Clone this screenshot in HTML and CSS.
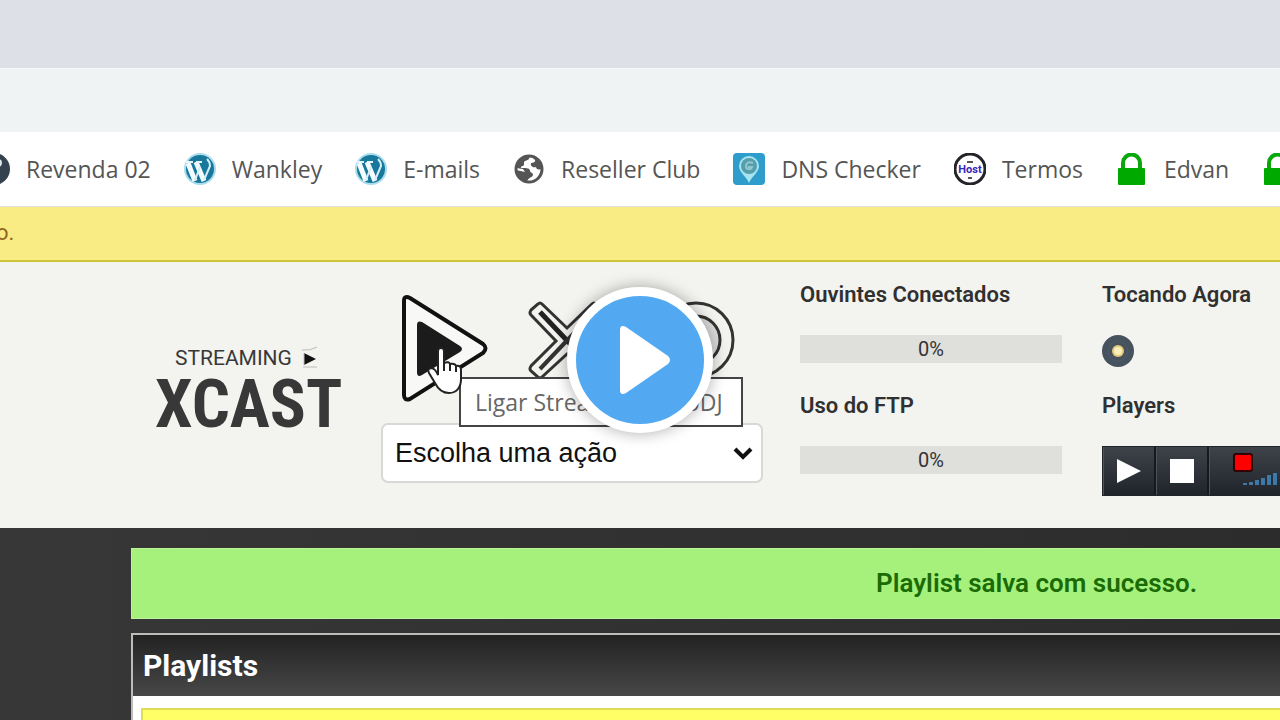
FILE: index.html
```html
<!DOCTYPE html>
<html lang="pt-BR">
<head>
<meta charset="utf-8">
<title>Streaming XCAST</title>
<link rel="stylesheet" href="styles.css">
</head>
<body>
<svg class="defs" aria-hidden="true">
  <symbol id="wordpress" viewBox="0 0 32 32">
    <circle cx="16" cy="16" r="16" fill="#a9dcec"/>
    <circle cx="16" cy="16" r="14" fill="#17789c"/>
    <path d="M4 10l7 18M12 9l8 19" stroke="#f4fcff" stroke-width="5" fill="none"/>
    <path d="M11 27l5-13M20 27l6-14q0-4-3-7" stroke="#d3eef6" stroke-width="2" fill="none"/>
    <path d="M2 9h7M12 9h6" stroke="#e4f6fb" stroke-width="2"/>
  </symbol>
  <symbol id="lock" viewBox="0 0 32 32">
    <path d="M7 16V10a8 8 0 0 1 17 0v6" fill="none" stroke="#0aa80a" stroke-width="4"/>
    <rect x="2" y="15" width="27" height="17" rx="1" fill="#00a900"/>
  </symbol>
</svg>

<div class="tabstrip"></div>
<div class="toolbar"></div>

<nav class="bookmarks">
  <a class="bookmark" href="#"><svg class="favicon" viewBox="0 0 32 32"><circle cx="16" cy="16" r="16" fill="#34414f"/><circle cx="20" cy="10" r="4" fill="#dfe8ee"/></svg>Revenda 02</a>
  <a class="bookmark" href="#"><svg class="favicon"><use href="#wordpress"/></svg>Wankley</a>
  <a class="bookmark" href="#"><svg class="favicon"><use href="#wordpress"/></svg>E-mails</a>
  <a class="bookmark" href="#"><svg class="favicon" viewBox="0 0 32 32"><circle cx="16" cy="16" r="13" fill="#fff" stroke="#555" stroke-width="3"/><path d="M3 15C4 7 10 3 17 3c-1 4-2 4-5 5-2 1 0 4-2 5-2 0-3 2-1 2 5 0 8 0 8 3 0 2 3 1 3 4-1 3-5 2-6 7C8 28 3 23 3 17l9 2-2-3zM20 3c5 1 9 6 9 12-3 3-6 1-6-1-3 1-6-1-5-4 2 0 5-1 4-3s-3-1-2-4z" fill="#555"/></svg>Reseller Club</a>
  <a class="bookmark" href="#"><svg class="favicon" viewBox="0 0 32 32"><rect width="32" height="32" rx="4" fill="#2e9dcc"/><path d="M16 30C13 23 6 19 6 13a10 10 0 0 1 20 0c0 6-7 10-10 17z" fill="#a5e4f0"/><circle cx="16" cy="13" r="8" fill="#559fac"/><path d="M20 10c-4-2-7 0-7 3 0 4 5 4 6 1h-4" fill="none" stroke="#94c6cd" stroke-width="2"/></svg>DNS Checker</a>
  <a class="bookmark" href="#"><svg class="favicon" viewBox="0 0 32 32"><circle cx="16" cy="16" r="15" fill="#fff" stroke="#23232a" stroke-width="3"/><text x="16" y="20" class="host">Host</text><path d="M13 9h6M14 25h4" stroke="#555" stroke-width="2"/></svg>Termos</a>
  <a class="bookmark" href="#"><svg class="favicon"><use href="#lock"/></svg>Edvan</a>
  <a class="bookmark" href="#" aria-label="Site seguro"><svg class="favicon"><use href="#lock"/></svg></a>
</nav>

<div class="notice">o.</div>

<header class="header">
  <div class="logo">
    <div class="logo-top">STREAMING
      <svg class="logo-mark" viewBox="0 0 20 24"><path d="M4 7l12 6-12 6z" fill="#111"/><path d="M2 4q8 1 15-3M3 21h14M4 7v12" fill="none" stroke="#bbb"/></svg>
    </div>
    <div class="logo-name">XCAST</div>
  </div>

  <div class="controls">
    <div class="actions">
      <button class="action" aria-label="Ligar Streaming AutoDJ">
        <svg width="86" height="108" viewBox="0 0 86 108"><path d="M2 6q0-6 6-3l73 46q5 4 0 9L8 104q-6 2-6-4z" fill="#f8f8f6" stroke="#111" stroke-width="4"/><path d="M15 30q0-5 5-3l38 24q4 3 0 6L20 80q-5 3-5-3z" fill="#1b1b1b"/></svg>
      </button>
      <button class="action" aria-label="Desligar">
        <svg width="90" height="80" viewBox="0 0 90 80"><path d="M10 3q2-2 4 0l25 24L64 3q2-2 4 0l7 6q2 3 0 5L49 40l26 26q2 2 0 4l-7 6q-2 2-4 0L39 53 14 76q-2 2-4 0l-7-6q-2-2 0-5l25-25L3 14q-2-2 0-5z" fill="#f3f3f0" stroke="#333" stroke-width="3"/><path d="M12 11l54 57" stroke="#222" stroke-width="5"/><path d="M66 11 12 68" stroke="#333" stroke-width="4"/></svg>
      </button>
      <button class="action" aria-label="Reiniciar">
        <svg width="78" height="80" viewBox="0 0 78 80"><circle cx="39" cy="39" r="37" fill="#f3f3f0" stroke="#333" stroke-width="3"/><circle cx="39" cy="39" r="24" fill="#ddd" stroke="#333" stroke-width="3"/></svg>
      </button>
    </div>
    <select class="select" aria-label="Ação"><option>Escolha uma ação</option></select>
    <div class="tooltip">Ligar Streaming AutoDJ</div>
    <svg class="cursor" viewBox="0 0 36 48"><path d="M11 24V4q0-3 3-3t3 3v12q5-2 6 1 5-1 6 2 5-1 5 4v9c0 8-4 14-12 14-7 0-11-4-14-10L2 26q-2-4 2-5 4 0 7 7z" fill="#fff" stroke="#222" stroke-width="2"/><path d="M17 15v9M23 17v7M29 19v6" stroke="#222" stroke-width="2"/></svg>
  </div>

  <div class="column meters">
    <h2 class="label">Ouvintes Conectados</h2>
    <div class="meter">0%</div>
    <h2 class="label second">Uso do FTP</h2>
    <div class="meter">0%</div>
  </div>

  <div class="column now">
    <h2 class="label">Tocando Agora</h2>
    <svg class="disc" viewBox="0 0 32 32"><circle cx="16" cy="16" r="16" fill="#46525e"/><circle cx="16" cy="16" r="10" fill="none" stroke="#4e5a66"/><circle cx="16" cy="16" r="6" fill="#e3cb7c"/><circle cx="16" cy="16" r="4" fill="#fbeebb"/></svg>
    <h2 class="label after-disc">Players</h2>
    <div class="player">
      <button class="player-button" aria-label="Tocar"><svg width="24" height="24" viewBox="0 0 24 24"><path d="M0 0l24 12L0 24z" fill="#fff"/></svg></button>
      <button class="player-button" aria-label="Parar"><svg width="24" height="24" viewBox="0 0 24 24"><path d="M0 0h24v24H0z" fill="#fff"/></svg></button>
      <div class="volume"><svg width="68" height="48" viewBox="0 0 68 48"><rect x="25" y="7" width="18" height="17" rx="2" fill="#f00" stroke="#300" stroke-width="2"/><path d="M36 38v-2M42 38v-3M48 38v-5M54 38v-7M60 38V28M66 38V26" stroke="#3c78a8" stroke-width="4"/></svg></div>
    </div>
  </div>
</header>

<main class="main">
  <div class="success">Playlist salva com sucesso.</div>
  <section class="panel">
    <h1 class="panel-title">Playlists</h1>
    <div class="panel-body"><div class="panel-note"></div></div>
  </section>
</main>

<button class="play-overlay" aria-label="Reproduzir vídeo">
  <svg width="52" height="70" viewBox="0 0 52 70"><path d="M1 5q0-6 6-3l42 29q4 4 0 8L7 68q-6 3-6-3z" fill="#fff"/></svg>
</button>
</body>
</html>
```
FILE: styles.css
```css
* { box-sizing: border-box; }
body {
  margin: 0;
  height: 100vh;
  overflow: hidden;
  display: flex;
  flex-direction: column;
  background: #363636;
  font-family: Roboto, sans-serif;
  color: #333;
}
button { padding: 0; border: 0; background: none; cursor: pointer; }
h1, h2 { margin: 0; }
svg { display: block; flex: none; }
.defs { position: absolute; width: 0; height: 0; }

.tabstrip { flex: none; height: 69px; background: #dde1e7; border-bottom: 1px solid #f7f8fa; }
.toolbar { flex: none; height: 63px; background: #eff3f4; }
.bookmarks {
  flex: none;
  display: flex;
  align-items: center;
  gap: 33px;
  height: 75px;
  margin-left: -22px;
  background: #fff;
  border-bottom: 1px solid #e4e0da;
  overflow: hidden;
}
.bookmark {
  flex: none;
  display: flex;
  align-items: center;
  gap: 16px;
  color: #555;
  font-family: "Open Sans", sans-serif;
  font-size: 23px;
  text-decoration: none;
  white-space: nowrap;
}
.favicon { width: 32px; height: 32px; }
.host { font: bold 11px Roboto, sans-serif; fill: #3328b8; text-anchor: middle; }

.notice {
  flex: none;
  height: 55px;
  margin-left: -4px;
  line-height: 52px;
  font-size: 22px;
  color: #94651c;
  background: #faec85;
  border-bottom: 2px solid #cfc436;
}

.header {
  flex: none;
  display: flex;
  align-items: flex-start;
  height: 266px;
  padding: 21px 0 0 155px;
  background: #f3f3ef;
}
.logo { flex: none; width: 226px; padding-top: 63px; color: #383838; }
.logo-top { display: flex; align-items: center; gap: 8px; padding-left: 20px; font-size: 21px; line-height: 24px; }
.logo-mark { width: 20px; height: 24px; }
.logo-name { font: bold 67px/68px "Liberation Sans Narrow", "Roboto Condensed", Roboto, sans-serif; }

.controls { position: relative; flex: none; width: 382px; margin-right: 37px; padding-top: 12px; }
.actions { display: flex; justify-content: space-between; height: 108px; padding: 0 28px 0 21px; margin-bottom: 20px; }
.action { height: 108px; display: flex; align-items: flex-start; }
.action:not(:first-child) { padding-top: 6px; }
.select {
  appearance: none;
  display: block;
  width: 100%;
  height: 60px;
  padding: 0 12px;
  border: 2px solid #d8d8d6;
  border-radius: 7px;
  color: #111;
  font: 27px "Liberation Sans", sans-serif;
  background: #fff url("data:image/svg+xml,%3Csvg xmlns='http://www.w3.org/2000/svg' width='20' height='14'%3E%3Cpath d='M2 3l8 8 8-8' fill='none' stroke='%23111' stroke-width='4'/%3E%3C/svg%3E") no-repeat right 8px center;
}
.tooltip {
  position: absolute;
  left: 78px;
  top: 94px;
  height: 50px;
  padding: 0 18px 0 14px;
  border: 2px solid #444;
  background: #fff;
  color: #666;
  font: 23px/46px "Open Sans", sans-serif;
  white-space: nowrap;
}
.cursor { position: absolute; left: 46px; top: 64px; width: 36px; height: 48px; }

.label { font-size: 22px; line-height: 24px; font-weight: 600; color: #303030; white-space: nowrap; }
.column { display: flex; flex-direction: column; }
.meters { flex: none; width: 262px; margin-right: 40px; }
.meter { height: 28px; margin-top: 28px; background: #dfdfdc; font-size: 20px; line-height: 28px; text-align: center; }
.second { margin-top: 31px; }
.now { flex: 1; min-width: 0; }
.disc { width: 32px; height: 32px; margin-top: 28px; }
.after-disc { margin-top: 27px; }
.player {
  display: flex;
  height: 50px;
  margin-top: 28px;
  overflow: hidden;
  border: 1px solid #20252a;
  border-right: 0;
  background: linear-gradient(#3e434a, #20242a);
}
.player-button { flex: none; width: 53px; display: flex; align-items: center; justify-content: center; border-right: 2px solid #15191d; box-shadow: inset 1px 0 #4d535a; }
.volume { flex: 1; min-width: 0; overflow: hidden; box-shadow: inset 1px 0 #4d535a; }

.main { flex: 1; min-height: 0; display: flex; flex-direction: column; padding: 20px 0 0 131px; background: linear-gradient(90deg, #373737, #2c2c2c); }
.success {
  flex: none;
  padding-left: 744px;
  background: #a5f17c;
  border: 1px solid #b9f59a;
  border-right: 0;
  color: #1a6b06;
  font-size: 26px;
  font-weight: 600;
  line-height: 69px;
  white-space: nowrap;
}
.panel { flex: 1; min-height: 0; display: flex; flex-direction: column; margin-top: 14px; border: 2px solid #bcbcb8; border-width: 2px 0 0 2px; background: #fff; }
.panel-title {
  flex: none;
  padding-left: 10px;
  background: linear-gradient(#222, #484848);
  color: #fff;
  font-size: 30px;
  font-weight: 700;
  line-height: 61px;
}
.panel-body { flex: 1; min-height: 0; display: flex; padding: 12px 0 0 8px; }
.panel-note { flex: 1; background: #ff6; border: 2px solid #dddd55; border-width: 2px 0 0 2px; }

.play-overlay {
  position: fixed;
  left: 50%;
  top: 50%;
  transform: translate(-50%, -50%);
  display: flex;
  align-items: center;
  justify-content: center;
  width: 146px;
  height: 146px;
  padding-left: 10px;
  border: 9px solid #fff;
  border-radius: 50%;
  background: #53a9f1;
  box-shadow: 0 0 16px #0005;
}
```
